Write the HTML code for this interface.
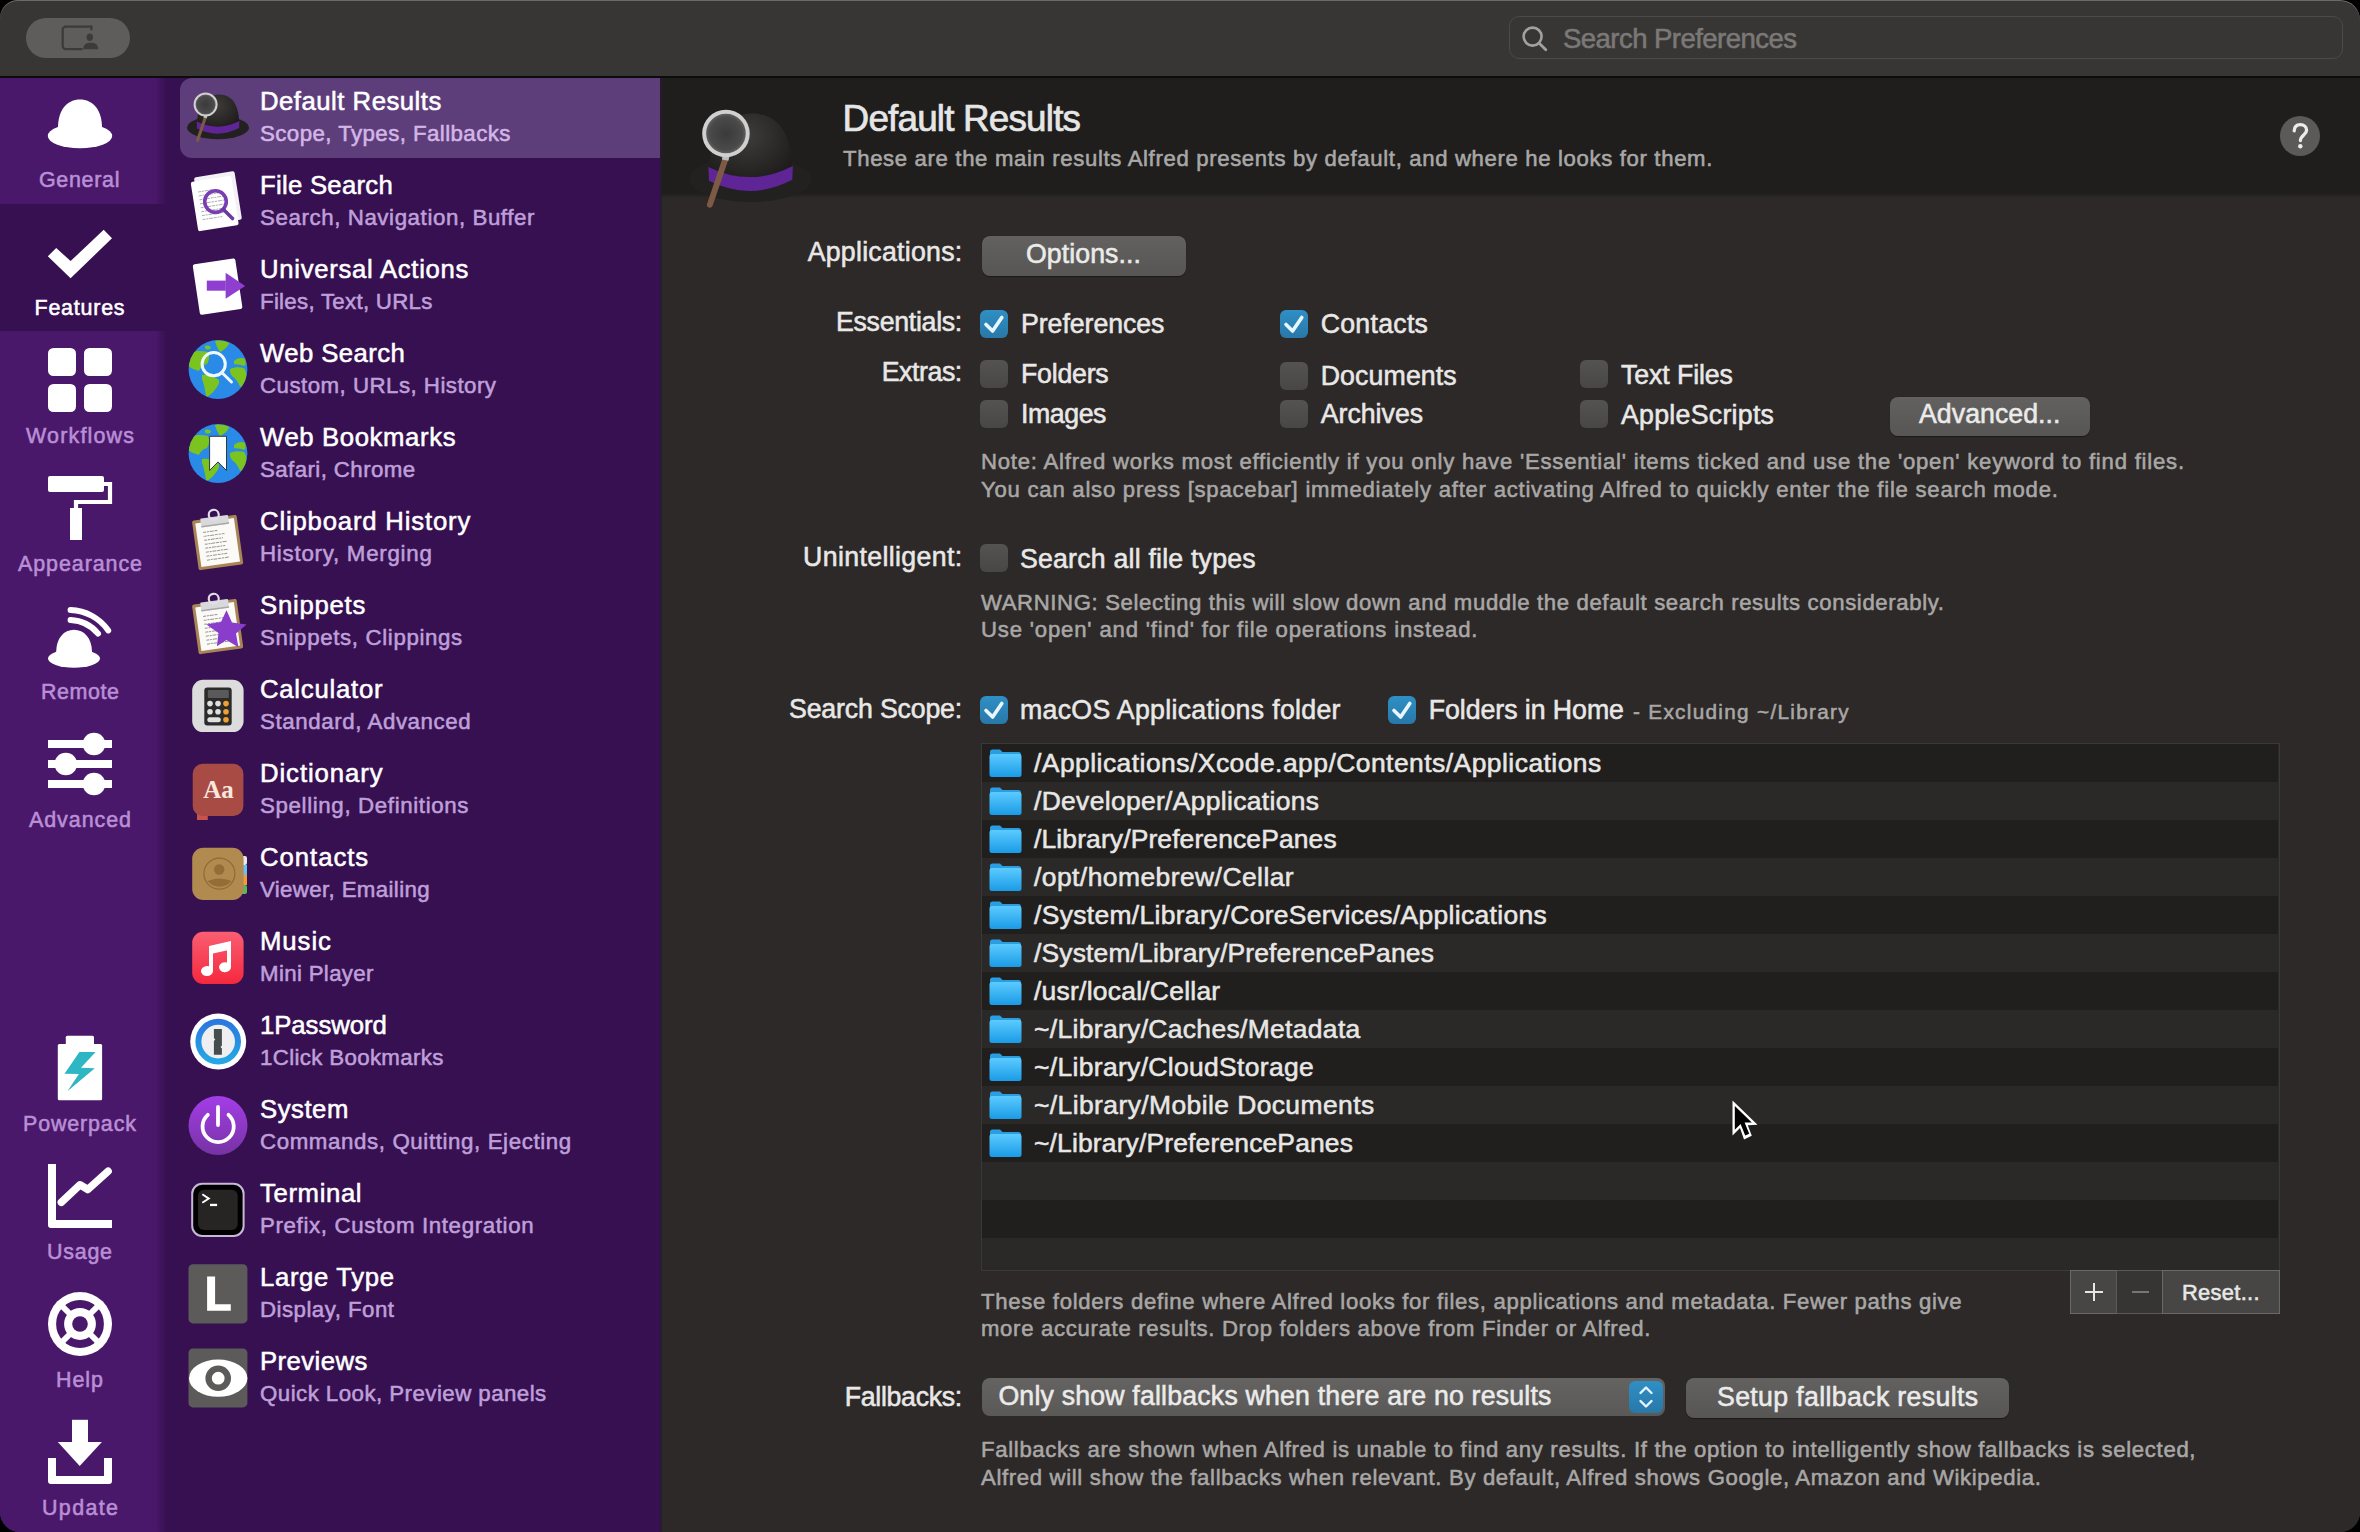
<!DOCTYPE html><html><head><meta charset="utf-8"><style>
html,body{margin:0;padding:0;background:#000;width:2360px;height:1532px;overflow:hidden}
#win{position:absolute;left:0;top:0;width:2360px;height:1532px;border-radius:18px 20px 20px 20px;overflow:hidden;background:#2c2928}
#bd{position:absolute;left:0;top:0;width:2360px;height:1532px;border-radius:18px 20px 20px 20px;box-shadow:inset 0 1px 0 #6c6a68;pointer-events:none}
.r{position:absolute}
.t{position:absolute;white-space:nowrap;line-height:1;font-family:"Liberation Sans",sans-serif;-webkit-text-stroke:0.55px currentColor}
</style></head><body>
<div id="win">
<div class="r" style="left:0px;top:0px;width:2360px;height:76px;background:#383634;"></div>
<div class="r" style="left:26px;top:18px;width:104px;height:40px;background:#5f5d5b;border-radius:20px;"></div>
<svg class="r" style="left:58px;top:24px" width="42" height="28" viewBox="0 0 42 28">
<path d="M33.4 6.2 V2.6 H7.7 a3 3 0 0 0 -3 3 V22.1 a3 3 0 0 0 3 3 H24.5" fill="none" stroke="#3d3b39" stroke-width="2.3"/>
<ellipse cx="31.8" cy="13.3" rx="3.2" ry="3.7" fill="#3d3b39"/>
<path d="M25.3 25.3 C25.3 20.5 28 18.8 32.7 18.8 C37.4 18.8 40.2 20.5 40.2 25.3 Z" fill="#3d3b39"/>
</svg>
<div class="r" style="left:1509px;top:16px;width:834px;height:43px;border:1.5px solid #4c4a48;border-radius:10px;box-sizing:border-box;"></div>
<svg class="r" style="left:1515px;top:20px" width="40" height="40" viewBox="1515 20 40 40">
<circle cx="1532.6" cy="36.6" r="9" fill="none" stroke="#a3a19f" stroke-width="2.6"/>
<line x1="1539.2" y1="43.2" x2="1545.8" y2="49.8" stroke="#a3a19f" stroke-width="2.8" stroke-linecap="round"/>
</svg>
<div class="t" style="left:1563.0px;top:24.9px;font-size:27.57px;color:#7b7977;letter-spacing:-0.569px;">Search Preferences</div>
<div class="r" style="left:0px;top:77px;width:160px;height:1455px;background:#4a186a;"></div>
<div class="r" style="left:0px;top:204px;width:160px;height:127px;background:#361050;"></div>
<div class="r" style="left:160px;top:77px;width:500px;height:1455px;background:#361050;"></div>
<div class="r" style="left:160px;top:204px;width:20px;height:127px;background:#361050;"></div>
<div class="r" style="left:155px;top:77px;width:12px;height:1455px;background:linear-gradient(90deg,#4a186a,#361050);"></div>
<div class="r" style="left:155px;top:204px;width:12px;height:127px;background:#361050;"></div>
<div class="r" style="left:180px;top:78px;width:480px;height:80px;background:#5e3d7b;border-radius:12px 0 0 12px;"></div>
<div class="t" style="left:39.0px;top:170.4px;font-size:21.43px;color:#b98fd6;letter-spacing:0.710px;">General</div>
<div class="t" style="left:34.5px;top:298.4px;font-size:21.43px;color:#ffffff;letter-spacing:0.792px;">Features</div>
<div class="t" style="left:26.0px;top:426.4px;font-size:21.43px;color:#b98fd6;letter-spacing:1.197px;">Workflows</div>
<div class="t" style="left:18.0px;top:554.4px;font-size:21.43px;color:#b98fd6;letter-spacing:0.937px;">Appearance</div>
<div class="t" style="left:41.0px;top:682.4px;font-size:21.43px;color:#b98fd6;letter-spacing:0.596px;">Remote</div>
<div class="t" style="left:29.0px;top:810.4px;font-size:21.43px;color:#b98fd6;letter-spacing:0.955px;">Advanced</div>
<div class="t" style="left:23.0px;top:1114.4px;font-size:21.43px;color:#b98fd6;letter-spacing:0.869px;">Powerpack</div>
<div class="t" style="left:47.0px;top:1242.4px;font-size:21.43px;color:#b98fd6;letter-spacing:0.762px;">Usage</div>
<div class="t" style="left:56.0px;top:1370.4px;font-size:21.43px;color:#b98fd6;letter-spacing:0.974px;">Help</div>
<div class="t" style="left:42.0px;top:1498.4px;font-size:21.43px;color:#b98fd6;letter-spacing:1.379px;">Update</div>
<div class="t" style="left:260.0px;top:88.7px;font-size:25.71px;color:#ffffff;letter-spacing:0.502px;">Default Results</div>
<div class="t" style="left:260.0px;top:123.2px;font-size:22.29px;color:#d2b6e6;letter-spacing:0.426px;">Scope, Types, Fallbacks</div>
<div class="t" style="left:260.0px;top:172.7px;font-size:25.71px;color:#ffffff;letter-spacing:0.274px;">File Search</div>
<div class="t" style="left:260.0px;top:207.2px;font-size:22.29px;color:#bf9fda;letter-spacing:0.590px;">Search, Navigation, Buffer</div>
<div class="t" style="left:260.0px;top:256.7px;font-size:25.71px;color:#ffffff;letter-spacing:0.704px;">Universal Actions</div>
<div class="t" style="left:260.0px;top:291.2px;font-size:22.29px;color:#bf9fda;letter-spacing:0.274px;">Files, Text, URLs</div>
<div class="t" style="left:260.0px;top:340.7px;font-size:25.71px;color:#ffffff;letter-spacing:0.420px;">Web Search</div>
<div class="t" style="left:260.0px;top:375.2px;font-size:22.29px;color:#bf9fda;letter-spacing:0.470px;">Custom, URLs, History</div>
<div class="t" style="left:260.0px;top:424.7px;font-size:25.71px;color:#ffffff;letter-spacing:0.621px;">Web Bookmarks</div>
<div class="t" style="left:260.0px;top:459.2px;font-size:22.29px;color:#bf9fda;letter-spacing:0.410px;">Safari, Chrome</div>
<div class="t" style="left:260.0px;top:508.7px;font-size:25.71px;color:#ffffff;letter-spacing:0.819px;">Clipboard History</div>
<div class="t" style="left:260.0px;top:543.2px;font-size:22.29px;color:#bf9fda;letter-spacing:0.754px;">History, Merging</div>
<div class="t" style="left:260.0px;top:592.7px;font-size:25.71px;color:#ffffff;letter-spacing:0.746px;">Snippets</div>
<div class="t" style="left:260.0px;top:627.2px;font-size:22.29px;color:#bf9fda;letter-spacing:0.640px;">Snippets, Clippings</div>
<div class="t" style="left:260.0px;top:676.7px;font-size:25.71px;color:#ffffff;letter-spacing:0.759px;">Calculator</div>
<div class="t" style="left:260.0px;top:711.2px;font-size:22.29px;color:#bf9fda;letter-spacing:0.587px;">Standard, Advanced</div>
<div class="t" style="left:260.0px;top:760.7px;font-size:25.71px;color:#ffffff;letter-spacing:0.919px;">Dictionary</div>
<div class="t" style="left:260.0px;top:795.2px;font-size:22.29px;color:#bf9fda;letter-spacing:0.638px;">Spelling, Definitions</div>
<div class="t" style="left:260.0px;top:844.7px;font-size:25.71px;color:#ffffff;letter-spacing:0.962px;">Contacts</div>
<div class="t" style="left:260.0px;top:879.2px;font-size:22.29px;color:#bf9fda;letter-spacing:0.351px;">Viewer, Emailing</div>
<div class="t" style="left:260.0px;top:928.7px;font-size:25.71px;color:#ffffff;letter-spacing:0.940px;">Music</div>
<div class="t" style="left:260.0px;top:963.2px;font-size:22.29px;color:#bf9fda;letter-spacing:0.327px;">Mini Player</div>
<div class="t" style="left:260.0px;top:1012.7px;font-size:25.71px;color:#ffffff;letter-spacing:-0.051px;">1Password</div>
<div class="t" style="left:260.0px;top:1047.2px;font-size:22.29px;color:#bf9fda;letter-spacing:0.338px;">1Click Bookmarks</div>
<div class="t" style="left:260.0px;top:1096.7px;font-size:25.71px;color:#ffffff;letter-spacing:0.534px;">System</div>
<div class="t" style="left:260.0px;top:1131.2px;font-size:22.29px;color:#bf9fda;letter-spacing:0.608px;">Commands, Quitting, Ejecting</div>
<div class="t" style="left:260.0px;top:1180.7px;font-size:25.71px;color:#ffffff;letter-spacing:0.632px;">Terminal</div>
<div class="t" style="left:260.0px;top:1215.2px;font-size:22.29px;color:#bf9fda;letter-spacing:0.642px;">Prefix, Custom Integration</div>
<div class="t" style="left:260.0px;top:1264.7px;font-size:25.71px;color:#ffffff;letter-spacing:0.646px;">Large Type</div>
<div class="t" style="left:260.0px;top:1299.2px;font-size:22.29px;color:#bf9fda;letter-spacing:0.468px;">Display, Font</div>
<div class="t" style="left:260.0px;top:1348.7px;font-size:25.71px;color:#ffffff;letter-spacing:0.425px;">Previews</div>
<div class="t" style="left:260.0px;top:1383.2px;font-size:22.29px;color:#bf9fda;letter-spacing:0.453px;">Quick Look, Preview panels</div>
<div class="r" style="left:660px;top:77px;width:1700px;height:1455px;background:#2c2928;"></div>
<div class="r" style="left:660px;top:77px;width:1700px;height:116px;background:#1f1e1d;"></div>
<div class="r" style="left:660px;top:193px;width:1700px;height:5px;background:linear-gradient(#1f1e1d,#2c2928);"></div>
<div class="t" style="left:842.6px;top:101.4px;font-size:36.86px;color:#e6e6e6;letter-spacing:-0.823px;-webkit-text-stroke:0.7px currentColor;">Default Results</div>
<div class="t" style="left:843.0px;top:147.8px;font-size:22.14px;color:#a9a8a7;letter-spacing:0.658px;">These are the main results Alfred presents by default, and where he looks for them.</div>
<div class="r" style="left:2280px;top:116px;width:40px;height:40px;background:#5b5a59;border-radius:50%;"></div>
<div class="r" style="left:0px;top:76px;width:2360px;height:2px;background:#0d0c0c;"></div>
<div class="r" style="left:660px;top:78px;width:3px;height:1454px;background:linear-gradient(90deg,#2a1438,rgba(40,30,40,0.6),rgba(44,41,40,0));"></div>
<svg class="r" style="left:0;top:0" width="660" height="1532" viewBox="0 0 660 1532"><ellipse cx="80" cy="136" rx="32.2" ry="12.2" fill="#ffffff"/><path d="M58 128 C58 110 67 99.6 80 99.6 C93 99.6 102 110 102 128 Z" fill="#ffffff"/><polygon points="47.8,256.3 56.2,247.9 70.6,261.1 103.7,229.8 112,238.3 70.6,278.2" fill="#ffffff"/><rect x="48" y="348" width="28" height="28" rx="5.5" fill="#ffffff"/><rect x="48" y="384" width="28" height="28" rx="5.5" fill="#ffffff"/><rect x="84" y="348" width="28" height="28" rx="5.5" fill="#ffffff"/><rect x="84" y="384" width="28" height="28" rx="5.5" fill="#ffffff"/><rect x="48" y="476" width="56" height="16" rx="2" fill="#ffffff"/><path d="M104 484 H110 V502 H76 V510" fill="none" stroke="#ffffff" stroke-width="4.2"/><rect x="70" y="508" width="12" height="32" fill="#ffffff"/><ellipse cx="74" cy="658.5" rx="26" ry="9.3" fill="#ffffff"/><path d="M56.2 652 C56.2 638 64 629.7 74 629.7 C84 629.7 92 638 92 652 Z" fill="#ffffff"/><path d="M70.5 620 A38 38 0 0 1 98.1 633.6" fill="none" stroke="#ffffff" stroke-width="5.8" stroke-linecap="round"/><path d="M70.5 610 A48 48 0 0 1 108.3 630.5" fill="none" stroke="#ffffff" stroke-width="5.8" stroke-linecap="round"/><rect x="48" y="740" width="64" height="8" fill="#ffffff"/><circle cx="94" cy="744" r="11.3" fill="#ffffff"/><rect x="48" y="760" width="64" height="8" fill="#ffffff"/><circle cx="65.8" cy="764" r="11.3" fill="#ffffff"/><rect x="48" y="780" width="64" height="8" fill="#ffffff"/><circle cx="94" cy="784" r="11.3" fill="#ffffff"/><rect x="57.8" y="1044" width="44.3" height="56.3" rx="1.5" fill="#ffffff"/><rect x="65.8" y="1035.8" width="28.2" height="9" rx="1.5" fill="#ffffff"/><polygon points="79.4,1052 95.6,1052 81,1067.7 94.8,1068.2 67.4,1091.2 78.9,1074 64.5,1073.7" fill="#2fb6c3"/><path d="M48 1164 H56 V1220 H112 V1228 H51 A3 3 0 0 1 48 1225 Z" fill="#ffffff"/><polyline points="61.4,1202.3 80,1184.8 87.8,1189.5 108.1,1171.2" fill="none" stroke="#ffffff" stroke-width="7.6" stroke-linecap="round" stroke-linejoin="round"/><circle cx="80" cy="1324" r="32" fill="#ffffff"/><circle cx="80" cy="1324" r="19.9" fill="none" stroke="#4a186a" stroke-width="8"/><g stroke="#ffffff" stroke-width="6"><line x1="62" y1="1306" x2="98" y2="1342"/><line x1="98" y1="1306" x2="62" y2="1342"/></g><circle cx="80" cy="1324" r="7.8" fill="#4a186a"/><rect x="72" y="1419.8" width="16" height="23" fill="#ffffff"/><polygon points="57.8,1442 101.9,1442 79.7,1466" fill="#ffffff"/><path d="M48 1458 H56 V1476 H104 V1458 H112 V1481 A3 3 0 0 1 109 1484 H51 A3 3 0 0 1 48 1481 Z" fill="#ffffff"/><g transform="translate(218 120) scale(1.0)">
<defs><radialGradient id="hd" cx="0.45" cy="0.3" r="0.7"><stop offset="0" stop-color="#3e3d3b"/><stop offset="1" stop-color="#1b1a19"/></radialGradient>
<radialGradient id="hm" cx="0.5" cy="0.5" r="0.5"><stop offset="0" stop-color="#3a3a3a"/><stop offset="0.75" stop-color="#4a4a4a"/><stop offset="1" stop-color="#6a6a6a"/></radialGradient></defs>
<ellipse cx="0" cy="7.7" rx="31" ry="11.5" fill="#222120"/>
<path d="M-21 8 C-22 -10 -14 -25.5 1 -25.5 C17 -25.5 22 -10 21 8 Q0 16 -21 8 Z" fill="url(#hd)"/>
<path d="M-21.3 1.5 Q0 12 21.4 1 L21.1 8 Q0 19 -21 8.5 Z" fill="#5f2596"/>
<line x1="-12.5" y1="-3" x2="-20.5" y2="20.5" stroke="#7d5a44" stroke-width="3" stroke-linecap="round"/>
<line x1="-11.8" y1="-7" x2="-12.8" y2="-2" stroke="#bdbdbd" stroke-width="3.4"/>
<circle cx="-12.4" cy="-15.4" r="11" fill="url(#hm)" stroke="#d0d0d0" stroke-width="2"/>
</g><g transform="rotate(-9 218 202)">
<rect x="198" y="174" width="41" height="49" rx="2" fill="#f4f0f6"/>
<rect x="194" y="178" width="41" height="50" rx="2" fill="#ffffff"/>
<g stroke="#666" stroke-width="0.9" stroke-dasharray="3 0.8 2 0.8 4 0.8" opacity="0.55">
<line x1="200" y1="189" x2="214" y2="189"/><line x1="200" y1="193" x2="224" y2="193"/><line x1="200" y1="197" x2="226" y2="197"/>
<line x1="200" y1="201" x2="226" y2="201"/><line x1="200" y1="205" x2="227" y2="205"/><line x1="200" y1="209" x2="225" y2="209"/>
<line x1="200" y1="213" x2="226" y2="213"/><line x1="200" y1="217" x2="220" y2="217"/></g></g>
<circle cx="215.5" cy="201.6" r="10.8" fill="none" stroke="#7b3db3" stroke-width="3.6"/>
<line x1="223.5" y1="209.5" x2="232.5" y2="218.5" stroke="#6a3a9e" stroke-width="3.6" stroke-linecap="round"/><g transform="rotate(-8.5 218 286)"><rect x="196" y="261" width="43" height="51" rx="2" fill="#ffffff"/></g>
<rect x="206.8" y="280.6" width="19" height="10.1" fill="#8e3fd0"/>
<polygon points="225.6,272.8 245.2,285.9 225.6,298.7" fill="#8e3fd0"/><circle cx="218" cy="369.5" r="29.4" fill="#2a8ae8"/><clipPath id="gc369"><circle cx="218" cy="369.5" r="29.4"/></clipPath><g clip-path="url(#gc369)" fill="#7bc31f"><path d="M 215.0 341.0 C 220.0 340.0 226.0 341.0 229.0 343.0 C 228.0 347.0 224.0 350.0 220.0 352.0 C 218.0 349.0 216.0 345.0 215.0 341.0 Z"/><path d="M 205.0 346.0 C 208.0 345.0 211.0 346.0 211.0 348.0 C 209.0 350.0 206.0 350.0 205.0 348.0 Z"/><path d="M 192.0 353.0 C 196.0 350.0 202.0 351.0 208.0 352.0 C 210.0 356.0 209.0 361.0 207.0 364.0 C 203.0 365.0 200.0 368.0 199.0 371.0 C 195.0 370.0 191.0 368.0 188.0 366.0 C 188.0 361.0 189.0 356.0 192.0 353.0 Z"/><path d="M 202.0 375.0 C 208.0 374.0 215.0 377.0 219.0 380.0 C 220.0 384.0 217.0 387.0 214.0 391.0 C 211.0 394.0 209.0 397.0 206.0 396.0 C 205.0 390.0 204.0 384.0 202.0 379.0 Z"/><path d="M 234.0 361.0 C 237.0 358.0 242.0 357.0 245.0 359.0 C 246.0 362.0 246.0 365.0 244.0 366.0 C 240.0 364.0 236.0 365.0 234.0 364.0 Z"/><path d="M 230.0 369.0 C 234.0 367.0 240.0 367.0 244.0 368.0 C 247.0 372.0 247.0 378.0 244.0 383.0 C 242.0 386.0 241.0 387.0 240.0 387.0 C 238.0 382.0 236.0 379.0 232.0 376.0 C 230.0 374.0 230.0 371.0 230.0 369.0 Z"/></g><circle cx="213.7" cy="364.2" r="11.6" fill="none" stroke="#eef8ff" stroke-width="3"/><line x1="221.8" y1="372.5" x2="231.5" y2="382" stroke="#eef8ff" stroke-width="3" stroke-linecap="round"/><circle cx="218" cy="453.5" r="29.4" fill="#2a8ae8"/><clipPath id="gc453"><circle cx="218" cy="453.5" r="29.4"/></clipPath><g clip-path="url(#gc453)" fill="#7bc31f"><path d="M 215.0 425.0 C 220.0 424.0 226.0 425.0 229.0 427.0 C 228.0 431.0 224.0 434.0 220.0 436.0 C 218.0 433.0 216.0 429.0 215.0 425.0 Z"/><path d="M 205.0 430.0 C 208.0 429.0 211.0 430.0 211.0 432.0 C 209.0 434.0 206.0 434.0 205.0 432.0 Z"/><path d="M 192.0 437.0 C 196.0 434.0 202.0 435.0 208.0 436.0 C 210.0 440.0 209.0 445.0 207.0 448.0 C 203.0 449.0 200.0 452.0 199.0 455.0 C 195.0 454.0 191.0 452.0 188.0 450.0 C 188.0 445.0 189.0 440.0 192.0 437.0 Z"/><path d="M 202.0 459.0 C 208.0 458.0 215.0 461.0 219.0 464.0 C 220.0 468.0 217.0 471.0 214.0 475.0 C 211.0 478.0 209.0 481.0 206.0 480.0 C 205.0 474.0 204.0 468.0 202.0 463.0 Z"/><path d="M 234.0 445.0 C 237.0 442.0 242.0 441.0 245.0 443.0 C 246.0 446.0 246.0 449.0 244.0 450.0 C 240.0 448.0 236.0 449.0 234.0 448.0 Z"/><path d="M 230.0 453.0 C 234.0 451.0 240.0 451.0 244.0 452.0 C 247.0 456.0 247.0 462.0 244.0 467.0 C 242.0 470.0 241.0 471.0 240.0 471.0 C 238.0 466.0 236.0 463.0 232.0 460.0 C 230.0 458.0 230.0 455.0 230.0 453.0 Z"/></g><polygon points="209.6,436.3 226.5,436.3 226.5,470.5 218,461.9 209.6,470.5" fill="#ffffff" stroke="#2d3a40" stroke-width="1"/><g transform="rotate(-8 217.5 541.5)">
<rect x="195.0" y="517.5" width="45" height="50" rx="2" fill="#a98456"/>
<rect x="198.0" y="520.5" width="39" height="44" fill="#fbfaf7"/>
<g stroke="#555" stroke-width="1" stroke-dasharray="3 0.8 2 0.8 4 0.8" opacity="0.6"><line x1="204.5" y1="530.5" x2="219.5" y2="530.5"/><line x1="204.5" y1="534.5" x2="225.5" y2="534.5"/><line x1="204.5" y1="538.5" x2="223.5" y2="538.5"/><line x1="204.5" y1="542.5" x2="226.5" y2="542.5"/><line x1="204.5" y1="546.5" x2="224.5" y2="546.5"/><line x1="204.5" y1="550.5" x2="227.5" y2="550.5"/><line x1="204.5" y1="554.5" x2="225.5" y2="554.5"/><line x1="204.5" y1="558.5" x2="226.5" y2="558.5"/></g>
<rect x="203.5" y="516.5" width="28" height="9" rx="1" fill="#d9d9dc"/>
<rect x="203.5" y="524.0" width="28" height="1.5" fill="#a8a8aa"/>
<circle cx="217.5" cy="514.5" r="5" fill="none" stroke="#e4dce8" stroke-width="2.2"/>
</g><g transform="rotate(-8 217.5 625.5)">
<rect x="195.0" y="601.5" width="45" height="50" rx="2" fill="#a98456"/>
<rect x="198.0" y="604.5" width="39" height="44" fill="#fbfaf7"/>
<g stroke="#555" stroke-width="1" stroke-dasharray="3 0.8 2 0.8 4 0.8" opacity="0.6"><line x1="204.5" y1="614.5" x2="219.5" y2="614.5"/><line x1="204.5" y1="618.5" x2="225.5" y2="618.5"/><line x1="204.5" y1="622.5" x2="223.5" y2="622.5"/><line x1="204.5" y1="626.5" x2="226.5" y2="626.5"/><line x1="204.5" y1="630.5" x2="224.5" y2="630.5"/><line x1="204.5" y1="634.5" x2="227.5" y2="634.5"/><line x1="204.5" y1="638.5" x2="225.5" y2="638.5"/><line x1="204.5" y1="642.5" x2="226.5" y2="642.5"/></g>
<rect x="203.5" y="600.5" width="28" height="9" rx="1" fill="#d9d9dc"/>
<rect x="203.5" y="608.0" width="28" height="1.5" fill="#a8a8aa"/>
<circle cx="217.5" cy="598.5" r="5" fill="none" stroke="#e4dce8" stroke-width="2.2"/>
</g><polygon points="226.5,610.2 232,622.5 246.6,624.4 236,633.5 238.4,647.2 226.5,640 216.9,646.3 218.5,633 206.4,624.4 221,622" fill="#8a3cca"/><rect x="192.2" y="679.8" width="51.4" height="52.3" rx="11" fill="#dcdcdc"/>
<rect x="204.3" y="687.4" width="27.4" height="38.1" rx="3" fill="#2b2b2b"/>
<rect x="207.8" y="690.1" width="21" height="7.8" rx="1" fill="#5a5a5a"/>
<g fill="#e0e0e0"><circle cx="210" cy="703.6" r="2.8"/><circle cx="218" cy="703.6" r="2.8"/><circle cx="210" cy="711.8" r="2.8"/><circle cx="218" cy="711.8" r="2.8"/><rect x="207.3" y="717.3" width="13.5" height="5" rx="2.5"/></g>
<g fill="#f0a030"><circle cx="226" cy="703.6" r="2.8"/><circle cx="226" cy="711.8" r="2.8"/><circle cx="226" cy="719.8" r="2.8"/></g><rect x="197" y="812" width="10.8" height="8" fill="#c9524c"/>
<rect x="192.7" y="763.8" width="50.7" height="52.1" rx="10" fill="#a94b45"/>
<text x="218.5" y="797.9" text-anchor="middle" font-family="Liberation Serif" font-weight="bold" font-size="25" fill="#f7e8de">Aa</text><rect x="240" y="856" width="7" height="9" rx="2" fill="#e8e8e8"/><rect x="240" y="865" width="7" height="10" fill="#6cc0ee"/>
<rect x="240" y="875" width="7" height="10" fill="#f39a3a"/><rect x="240" y="885" width="7" height="9" rx="2" fill="#5cb85c"/>
<rect x="192.2" y="847.8" width="51.4" height="52.1" rx="11" fill="#b08a4e"/>
<circle cx="219.4" cy="873.6" r="15.5" fill="none" stroke="#8f6a35" stroke-width="1.2"/>
<circle cx="219.2" cy="869.5" r="5.2" fill="#946c36"/>
<path d="M207.5 881 Q219.4 876 231.5 881 A15.5 15.5 0 0 1 207.5 881 Z" fill="#946c36"/><defs><linearGradient id="mg" x1="0" y1="0" x2="0" y2="1"><stop offset="0" stop-color="#fa5e72"/><stop offset="1" stop-color="#f5283d"/></linearGradient></defs>
<rect x="192.2" y="931.8" width="51.4" height="52.1" rx="11" fill="url(#mg)"/>
<path d="M209 946 L231 941 V949.5 L213 953.6 V971 A6 5 0 1 1 209 966.3 Z" fill="#fff"/>
<path d="M227 947 H231 V967 A6 5 0 1 1 227 962.5 Z" fill="#fff"/><defs><linearGradient id="pg" x1="0" y1="0" x2="0" y2="1"><stop offset="0" stop-color="#2a78e0"/><stop offset="1" stop-color="#25a8e4"/></linearGradient></defs>
<circle cx="218.2" cy="1041.6" r="28" fill="#ffffff"/>
<circle cx="218.2" cy="1041.6" r="19.8" fill="#efeff1" stroke="url(#pg)" stroke-width="6"/>
<path d="M213.9 1029 H221.9 V1045.5 L220.5 1047 L221.9 1048.5 V1054.7 H213.9 V1041 L215.3 1039.5 L213.9 1038 Z" fill="#454d4d"/><defs><linearGradient id="sg" x1="0" y1="0" x2="0" y2="1"><stop offset="0" stop-color="#a43de8"/><stop offset="1" stop-color="#7633a3"/></linearGradient></defs>
<circle cx="218" cy="1125.5" r="29.5" fill="url(#sg)"/>
<path d="M207.8 1114.8 A15.6 15.6 0 1 0 228.5 1114.8" fill="none" stroke="#fff" stroke-width="3.8" stroke-linecap="round"/>
<line x1="218" y1="1107" x2="218" y2="1125" stroke="#fff" stroke-width="3.8" stroke-linecap="round"/><rect x="192.2" y="1183.8" width="51.4" height="52.1" rx="10" fill="#000" stroke="#c8b8d8" stroke-width="2"/>
<rect x="198" y="1189.8" width="39.7" height="40.2" rx="6" fill="#262523"/>
<polyline points="202.3,1194.3 208.8,1198.6 202.3,1202.8" fill="none" stroke="#fff" stroke-width="1.9"/>
<rect x="210" y="1203.8" width="7.1" height="2.3" fill="#fff"/><rect x="188.5" y="1264.2" width="58.9" height="59.2" rx="4.5" fill="#5c5b5a"/>
<path d="M207.1 1276.6 H215.1 V1304.3 H230.8 V1310.8 H207.1 Z" fill="#fff"/><rect x="188.5" y="1348.5" width="58.9" height="58.9" rx="4.5" fill="#5c5b5a"/>
<ellipse cx="218.2" cy="1378.2" rx="29.2" ry="18.6" fill="#fff"/>
<circle cx="218.2" cy="1378.2" r="9.6" fill="none" stroke="#5c5b5a" stroke-width="6.4"/></svg>
<svg class="r" style="left:660px;top:77px" width="200" height="140" viewBox="660 77 200 140"><g transform="translate(750.5 164) scale(1.98)">
<defs><radialGradient id="Hd" cx="0.45" cy="0.3" r="0.7"><stop offset="0" stop-color="#3e3d3b"/><stop offset="1" stop-color="#1b1a19"/></radialGradient>
<radialGradient id="Hm" cx="0.5" cy="0.5" r="0.5"><stop offset="0" stop-color="#3a3a3a"/><stop offset="0.75" stop-color="#4a4a4a"/><stop offset="1" stop-color="#6a6a6a"/></radialGradient></defs>
<ellipse cx="0" cy="7.7" rx="31" ry="11.5" fill="#222120"/>
<path d="M-21 8 C-22 -10 -14 -25.5 1 -25.5 C17 -25.5 22 -10 21 8 Q0 16 -21 8 Z" fill="url(#Hd)"/>
<path d="M-21.3 1.5 Q0 12 21.4 1 L21.1 8 Q0 19 -21 8.5 Z" fill="#5f2596"/>
<line x1="-12.5" y1="-3" x2="-20.5" y2="20.5" stroke="#7d5a44" stroke-width="3" stroke-linecap="round"/>
<line x1="-11.8" y1="-7" x2="-12.8" y2="-2" stroke="#bdbdbd" stroke-width="3.4"/>
<circle cx="-12.4" cy="-15.4" r="11" fill="url(#Hm)" stroke="#d0d0d0" stroke-width="2"/>
</g></svg>
<div class="t" style="left:807.7px;top:239.4px;font-size:26.71px;color:#e9e8e7;letter-spacing:0.261px;">Applications:</div>
<div class="t" style="left:836.0px;top:309.1px;font-size:26.71px;color:#e9e8e7;letter-spacing:-0.286px;">Essentials:</div>
<div class="t" style="left:881.7px;top:358.9px;font-size:26.71px;color:#e9e8e7;letter-spacing:-0.422px;">Extras:</div>
<div class="t" style="left:803.0px;top:544.2px;font-size:26.71px;color:#e9e8e7;letter-spacing:0.374px;">Unintelligent:</div>
<div class="t" style="left:789.0px;top:695.7px;font-size:26.71px;color:#e9e8e7;letter-spacing:-0.162px;">Search Scope:</div>
<div class="t" style="left:844.8px;top:1383.9px;font-size:26.71px;color:#e9e8e7;letter-spacing:-0.316px;">Fallbacks:</div>
<div class="r" style="left:982px;top:236px;width:204px;height:40px;background:linear-gradient(#626160,#575655);border-radius:8px;box-shadow:0 0.5px 1px rgba(0,0,0,0.4);"></div>
<div class="t" style="left:1026.0px;top:241.4px;font-size:26.71px;color:#ebebea;letter-spacing:0.074px;">Options...</div>
<div class="r" style="left:1890px;top:396.5px;width:200px;height:39.5px;background:linear-gradient(#626160,#575655);border-radius:8px;box-shadow:0 0.5px 1px rgba(0,0,0,0.4);"></div>
<div class="t" style="left:1919.0px;top:401.4px;font-size:26.71px;color:#ebebea;letter-spacing:0.042px;">Advanced...</div>
<div class="r" style="left:1686px;top:1378px;width:323px;height:40px;background:linear-gradient(#626160,#575655);border-radius:8px;box-shadow:0 0.5px 1px rgba(0,0,0,0.4);"></div>
<div class="t" style="left:1717.0px;top:1383.9px;font-size:26.71px;color:#ebebea;letter-spacing:0.347px;">Setup fallback results</div>
<div class="r" style="left:980px;top:310px;width:28px;height:28px;background:linear-gradient(#2f8fc4,#2878a8);border-radius:6px;"></div>
<svg class="r" style="left:980px;top:310px" width="28" height="28" viewBox="0 0 28 28"><polyline points="6,14.5 12.6,21 21.8,7.5" fill="none" stroke="#eaf6ff" stroke-width="3.6" stroke-linecap="round" stroke-linejoin="round"/></svg>
<div class="r" style="left:1280px;top:310px;width:28px;height:28px;background:linear-gradient(#2f8fc4,#2878a8);border-radius:6px;"></div>
<svg class="r" style="left:1280px;top:310px" width="28" height="28" viewBox="0 0 28 28"><polyline points="6,14.5 12.6,21 21.8,7.5" fill="none" stroke="#eaf6ff" stroke-width="3.6" stroke-linecap="round" stroke-linejoin="round"/></svg>
<div class="r" style="left:980px;top:360px;width:28px;height:28px;background:linear-gradient(#545352,#484746);border-radius:6px;"></div>
<div class="r" style="left:1280px;top:362px;width:28px;height:28px;background:linear-gradient(#545352,#484746);border-radius:6px;"></div>
<div class="r" style="left:1580px;top:360px;width:28px;height:28px;background:linear-gradient(#545352,#484746);border-radius:6px;"></div>
<div class="r" style="left:980px;top:400px;width:28px;height:28px;background:linear-gradient(#545352,#484746);border-radius:6px;"></div>
<div class="r" style="left:1280px;top:400px;width:28px;height:28px;background:linear-gradient(#545352,#484746);border-radius:6px;"></div>
<div class="r" style="left:1580px;top:400px;width:28px;height:28px;background:linear-gradient(#545352,#484746);border-radius:6px;"></div>
<div class="r" style="left:980px;top:544px;width:28px;height:28px;background:linear-gradient(#545352,#484746);border-radius:6px;"></div>
<div class="r" style="left:980px;top:696px;width:28px;height:28px;background:linear-gradient(#2f8fc4,#2878a8);border-radius:6px;"></div>
<svg class="r" style="left:980px;top:696px" width="28" height="28" viewBox="0 0 28 28"><polyline points="6,14.5 12.6,21 21.8,7.5" fill="none" stroke="#eaf6ff" stroke-width="3.6" stroke-linecap="round" stroke-linejoin="round"/></svg>
<div class="r" style="left:1388px;top:696px;width:28px;height:28px;background:linear-gradient(#2f8fc4,#2878a8);border-radius:6px;"></div>
<svg class="r" style="left:1388px;top:696px" width="28" height="28" viewBox="0 0 28 28"><polyline points="6,14.5 12.6,21 21.8,7.5" fill="none" stroke="#eaf6ff" stroke-width="3.6" stroke-linecap="round" stroke-linejoin="round"/></svg>
<div class="t" style="left:1021.0px;top:310.9px;font-size:26.71px;color:#e9e8e7;letter-spacing:-0.054px;">Preferences</div>
<div class="t" style="left:1320.7px;top:310.9px;font-size:26.71px;color:#e9e8e7;letter-spacing:0.269px;">Contacts</div>
<div class="t" style="left:1021.0px;top:361.1px;font-size:26.71px;color:#e9e8e7;letter-spacing:-0.232px;">Folders</div>
<div class="t" style="left:1320.7px;top:362.6px;font-size:26.71px;color:#e9e8e7;letter-spacing:0.122px;">Documents</div>
<div class="t" style="left:1621.0px;top:361.9px;font-size:26.71px;color:#e9e8e7;letter-spacing:-0.090px;">Text Files</div>
<div class="t" style="left:1021.0px;top:401.2px;font-size:26.71px;color:#e9e8e7;letter-spacing:-0.419px;">Images</div>
<div class="t" style="left:1320.7px;top:401.2px;font-size:26.71px;color:#e9e8e7;letter-spacing:0.007px;">Archives</div>
<div class="t" style="left:1621.0px;top:401.9px;font-size:26.71px;color:#e9e8e7;letter-spacing:0.275px;">AppleScripts</div>
<div class="t" style="left:1020.0px;top:545.7px;font-size:26.71px;color:#e9e8e7;letter-spacing:0.203px;">Search all file types</div>
<div class="t" style="left:1020.0px;top:697.2px;font-size:26.71px;color:#e9e8e7;letter-spacing:0.304px;">macOS Applications folder</div>
<div class="t" style="left:1428.8px;top:696.9px;font-size:26.71px;color:#e9e8e7;letter-spacing:-0.055px;">Folders in Home</div>
<div class="t" style="left:1633.0px;top:702.0px;font-size:20.71px;color:#a9a7a6;letter-spacing:1.320px;">- Excluding ~/Library</div>
<div class="t" style="left:981.0px;top:451.3px;font-size:22.14px;color:#a9a7a6;letter-spacing:0.780px;">Note: Alfred works most efficiently if you only have 'Essential' items ticked and use the 'open' keyword to find files.</div>
<div class="t" style="left:981.0px;top:478.8px;font-size:22.14px;color:#a9a7a6;letter-spacing:0.756px;">You can also press [spacebar] immediately after activating Alfred to quickly enter the file search mode.</div>
<div class="t" style="left:981.0px;top:591.8px;font-size:22.14px;color:#a9a7a6;letter-spacing:0.636px;">WARNING: Selecting this will slow down and muddle the default search results considerably.</div>
<div class="t" style="left:981.0px;top:619.3px;font-size:22.14px;color:#a9a7a6;letter-spacing:0.825px;">Use 'open' and 'find' for file operations instead.</div>
<div class="t" style="left:981.0px;top:1291.1px;font-size:22.14px;color:#a9a7a6;letter-spacing:0.693px;">These folders define where Alfred looks for files, applications and metadata. Fewer paths give</div>
<div class="t" style="left:981.0px;top:1317.8px;font-size:22.14px;color:#a9a7a6;letter-spacing:0.692px;">more accurate results. Drop folders above from Finder or Alfred.</div>
<div class="t" style="left:981.0px;top:1439.3px;font-size:22.14px;color:#a9a7a6;letter-spacing:0.682px;">Fallbacks are shown when Alfred is unable to find any results. If the option to intelligently show fallbacks is selected,</div>
<div class="t" style="left:981.0px;top:1466.6px;font-size:22.14px;color:#a9a7a6;letter-spacing:0.656px;">Alfred will show the fallbacks when relevant. By default, Alfred shows Google, Amazon and Wikipedia.</div>
<div class="r" style="left:981px;top:743px;width:1299px;height:528px;background:#2b2a29;box-sizing:border-box;border:1px solid #3a3938;"></div>
<div class="r" style="left:982px;top:744px;width:1296px;height:38px;background:#201f1e;"></div>
<div class="r" style="left:982px;top:782px;width:1296px;height:38px;background:#2a2928;"></div>
<div class="r" style="left:982px;top:820px;width:1296px;height:38px;background:#201f1e;"></div>
<div class="r" style="left:982px;top:858px;width:1296px;height:38px;background:#2a2928;"></div>
<div class="r" style="left:982px;top:896px;width:1296px;height:38px;background:#201f1e;"></div>
<div class="r" style="left:982px;top:934px;width:1296px;height:38px;background:#2a2928;"></div>
<div class="r" style="left:982px;top:972px;width:1296px;height:38px;background:#201f1e;"></div>
<div class="r" style="left:982px;top:1010px;width:1296px;height:38px;background:#2a2928;"></div>
<div class="r" style="left:982px;top:1048px;width:1296px;height:38px;background:#201f1e;"></div>
<div class="r" style="left:982px;top:1086px;width:1296px;height:38px;background:#2a2928;"></div>
<div class="r" style="left:982px;top:1124px;width:1296px;height:38px;background:#201f1e;"></div>
<div class="r" style="left:982px;top:1162px;width:1296px;height:38px;background:#2a2928;"></div>
<div class="r" style="left:982px;top:1200px;width:1296px;height:38px;background:#201f1e;"></div>
<div class="r" style="left:982px;top:1238px;width:1296px;height:32px;background:#2a2928;"></div>
<svg width="0" height="0" style="position:absolute"><defs><linearGradient id="fg" x1="0" y1="0" x2="0" y2="1"><stop offset="0" stop-color="#5ccbff"/><stop offset="1" stop-color="#1a9be6"/></linearGradient></defs></svg>
<svg class="r" style="left:989px;top:749px" width="33" height="29" viewBox="0 0 33 29"><path d="M1 3 Q1 0.5 3.5 0.5 H11 L13.5 3 H29.5 Q32 3 32 5.5 V7 H1 Z" fill="#2a9ee0"/><rect x="0.5" y="5" width="32" height="23" rx="2.5" fill="url(#fg)"/></svg>
<div class="t" style="left:1034.0px;top:749.6px;font-size:26.43px;color:#e8e7e6;letter-spacing:0.474px;">/Applications/Xcode.app/Contents/Applications</div>
<svg class="r" style="left:989px;top:787px" width="33" height="29" viewBox="0 0 33 29"><path d="M1 3 Q1 0.5 3.5 0.5 H11 L13.5 3 H29.5 Q32 3 32 5.5 V7 H1 Z" fill="#2a9ee0"/><rect x="0.5" y="5" width="32" height="23" rx="2.5" fill="url(#fg)"/></svg>
<div class="t" style="left:1034.0px;top:787.6px;font-size:26.43px;color:#e8e7e6;letter-spacing:0.334px;">/Developer/Applications</div>
<svg class="r" style="left:989px;top:825px" width="33" height="29" viewBox="0 0 33 29"><path d="M1 3 Q1 0.5 3.5 0.5 H11 L13.5 3 H29.5 Q32 3 32 5.5 V7 H1 Z" fill="#2a9ee0"/><rect x="0.5" y="5" width="32" height="23" rx="2.5" fill="url(#fg)"/></svg>
<div class="t" style="left:1034.0px;top:825.6px;font-size:26.43px;color:#e8e7e6;letter-spacing:0.132px;">/Library/PreferencePanes</div>
<svg class="r" style="left:989px;top:863px" width="33" height="29" viewBox="0 0 33 29"><path d="M1 3 Q1 0.5 3.5 0.5 H11 L13.5 3 H29.5 Q32 3 32 5.5 V7 H1 Z" fill="#2a9ee0"/><rect x="0.5" y="5" width="32" height="23" rx="2.5" fill="url(#fg)"/></svg>
<div class="t" style="left:1034.0px;top:863.6px;font-size:26.43px;color:#e8e7e6;letter-spacing:0.449px;">/opt/homebrew/Cellar</div>
<svg class="r" style="left:989px;top:901px" width="33" height="29" viewBox="0 0 33 29"><path d="M1 3 Q1 0.5 3.5 0.5 H11 L13.5 3 H29.5 Q32 3 32 5.5 V7 H1 Z" fill="#2a9ee0"/><rect x="0.5" y="5" width="32" height="23" rx="2.5" fill="url(#fg)"/></svg>
<div class="t" style="left:1034.0px;top:901.6px;font-size:26.43px;color:#e8e7e6;letter-spacing:0.335px;">/System/Library/CoreServices/Applications</div>
<svg class="r" style="left:989px;top:939px" width="33" height="29" viewBox="0 0 33 29"><path d="M1 3 Q1 0.5 3.5 0.5 H11 L13.5 3 H29.5 Q32 3 32 5.5 V7 H1 Z" fill="#2a9ee0"/><rect x="0.5" y="5" width="32" height="23" rx="2.5" fill="url(#fg)"/></svg>
<div class="t" style="left:1034.0px;top:939.6px;font-size:26.43px;color:#e8e7e6;letter-spacing:0.162px;">/System/Library/PreferencePanes</div>
<svg class="r" style="left:989px;top:977px" width="33" height="29" viewBox="0 0 33 29"><path d="M1 3 Q1 0.5 3.5 0.5 H11 L13.5 3 H29.5 Q32 3 32 5.5 V7 H1 Z" fill="#2a9ee0"/><rect x="0.5" y="5" width="32" height="23" rx="2.5" fill="url(#fg)"/></svg>
<div class="t" style="left:1034.0px;top:977.6px;font-size:26.43px;color:#e8e7e6;letter-spacing:0.255px;">/usr/local/Cellar</div>
<svg class="r" style="left:989px;top:1015px" width="33" height="29" viewBox="0 0 33 29"><path d="M1 3 Q1 0.5 3.5 0.5 H11 L13.5 3 H29.5 Q32 3 32 5.5 V7 H1 Z" fill="#2a9ee0"/><rect x="0.5" y="5" width="32" height="23" rx="2.5" fill="url(#fg)"/></svg>
<div class="t" style="left:1034.0px;top:1015.6px;font-size:26.43px;color:#e8e7e6;letter-spacing:0.347px;">~/Library/Caches/Metadata</div>
<svg class="r" style="left:989px;top:1053px" width="33" height="29" viewBox="0 0 33 29"><path d="M1 3 Q1 0.5 3.5 0.5 H11 L13.5 3 H29.5 Q32 3 32 5.5 V7 H1 Z" fill="#2a9ee0"/><rect x="0.5" y="5" width="32" height="23" rx="2.5" fill="url(#fg)"/></svg>
<div class="t" style="left:1034.0px;top:1053.6px;font-size:26.43px;color:#e8e7e6;letter-spacing:0.346px;">~/Library/CloudStorage</div>
<svg class="r" style="left:989px;top:1091px" width="33" height="29" viewBox="0 0 33 29"><path d="M1 3 Q1 0.5 3.5 0.5 H11 L13.5 3 H29.5 Q32 3 32 5.5 V7 H1 Z" fill="#2a9ee0"/><rect x="0.5" y="5" width="32" height="23" rx="2.5" fill="url(#fg)"/></svg>
<div class="t" style="left:1034.0px;top:1091.6px;font-size:26.43px;color:#e8e7e6;letter-spacing:0.417px;">~/Library/Mobile Documents</div>
<svg class="r" style="left:989px;top:1129px" width="33" height="29" viewBox="0 0 33 29"><path d="M1 3 Q1 0.5 3.5 0.5 H11 L13.5 3 H29.5 Q32 3 32 5.5 V7 H1 Z" fill="#2a9ee0"/><rect x="0.5" y="5" width="32" height="23" rx="2.5" fill="url(#fg)"/></svg>
<div class="t" style="left:1034.0px;top:1129.6px;font-size:26.43px;color:#e8e7e6;letter-spacing:0.162px;">~/Library/PreferencePanes</div>
<div class="r" style="left:2070px;top:1270px;width:48px;height:44px;background:#474645;border:1.5px solid #6a6968;box-sizing:border-box;"></div>
<div class="r" style="left:2116px;top:1270px;width:48px;height:44px;background:#363534;border:1.5px solid #5a5958;box-sizing:border-box;"></div>
<div class="r" style="left:2162px;top:1270px;width:118px;height:44px;background:#474645;border:1.5px solid #6a6968;box-sizing:border-box;"></div>
<svg class="r" style="left:2070px;top:1270px" width="94" height="44" viewBox="0 0 94 44"><line x1="24" y1="13" x2="24" y2="31" stroke="#e6e6e6" stroke-width="2"/><line x1="15" y1="22" x2="33" y2="22" stroke="#e6e6e6" stroke-width="2"/><line x1="62" y1="22" x2="79" y2="22" stroke="#777675" stroke-width="2"/></svg>
<div class="t" style="left:2182.0px;top:1281.8px;font-size:21.86px;color:#e8e8e7;letter-spacing:0.311px;">Reset...</div>
<div class="r" style="left:982px;top:1378px;width:683px;height:38px;background:linear-gradient(#646362,#5a5958);border-radius:8px;"></div>
<div class="r" style="left:1629px;top:1381px;width:34px;height:32px;background:linear-gradient(#2f8fc4,#2878a8);border-radius:6px;"></div>
<svg class="r" style="left:1629px;top:1381px" width="34" height="32" viewBox="0 0 34 32"><polyline points="11.5,12 17,6.5 22.5,12" fill="none" stroke="#e6f4ff" stroke-width="2.4" stroke-linecap="round" stroke-linejoin="round"/><polyline points="11.5,20 17,25.5 22.5,20" fill="none" stroke="#e6f4ff" stroke-width="2.4" stroke-linecap="round" stroke-linejoin="round"/></svg>
<div class="t" style="left:998.4px;top:1382.9px;font-size:26.71px;color:#ebebea;letter-spacing:0.188px;">Only show fallbacks when there are no results</div>
<svg class="r" style="left:2270px;top:106px" width="60" height="60" viewBox="2270 106 60 60"><path d="M2294.2 130.8 C2294.4 126.6 2297 124.6 2300.3 124.6 C2304 124.6 2306.6 126.9 2306.6 130.2 C2306.6 134.6 2300.4 135.4 2300.4 140.6" fill="none" stroke="#ececec" stroke-width="3.3" stroke-linecap="round"/><circle cx="2300.3" cy="146.3" r="2.2" fill="#ececec"/></svg>
<svg class="r" style="left:1720px;top:1090px" width="50" height="60" viewBox="1720 1090 50 60"><polygon points="1732.5,1100.5 1732.5,1135.5 1740,1128 1744,1139.5 1751.8,1135.8 1747.8,1125.3 1757.5,1124.8" fill="#fff"/><polygon points="1734.8,1106 1734.8,1129.8 1740.6,1124 1745.2,1135.6 1749.2,1133.8 1744.6,1122.6 1751.8,1122.4" fill="#000"/></svg>
<div id="bd"></div>
</div>
</body></html>
